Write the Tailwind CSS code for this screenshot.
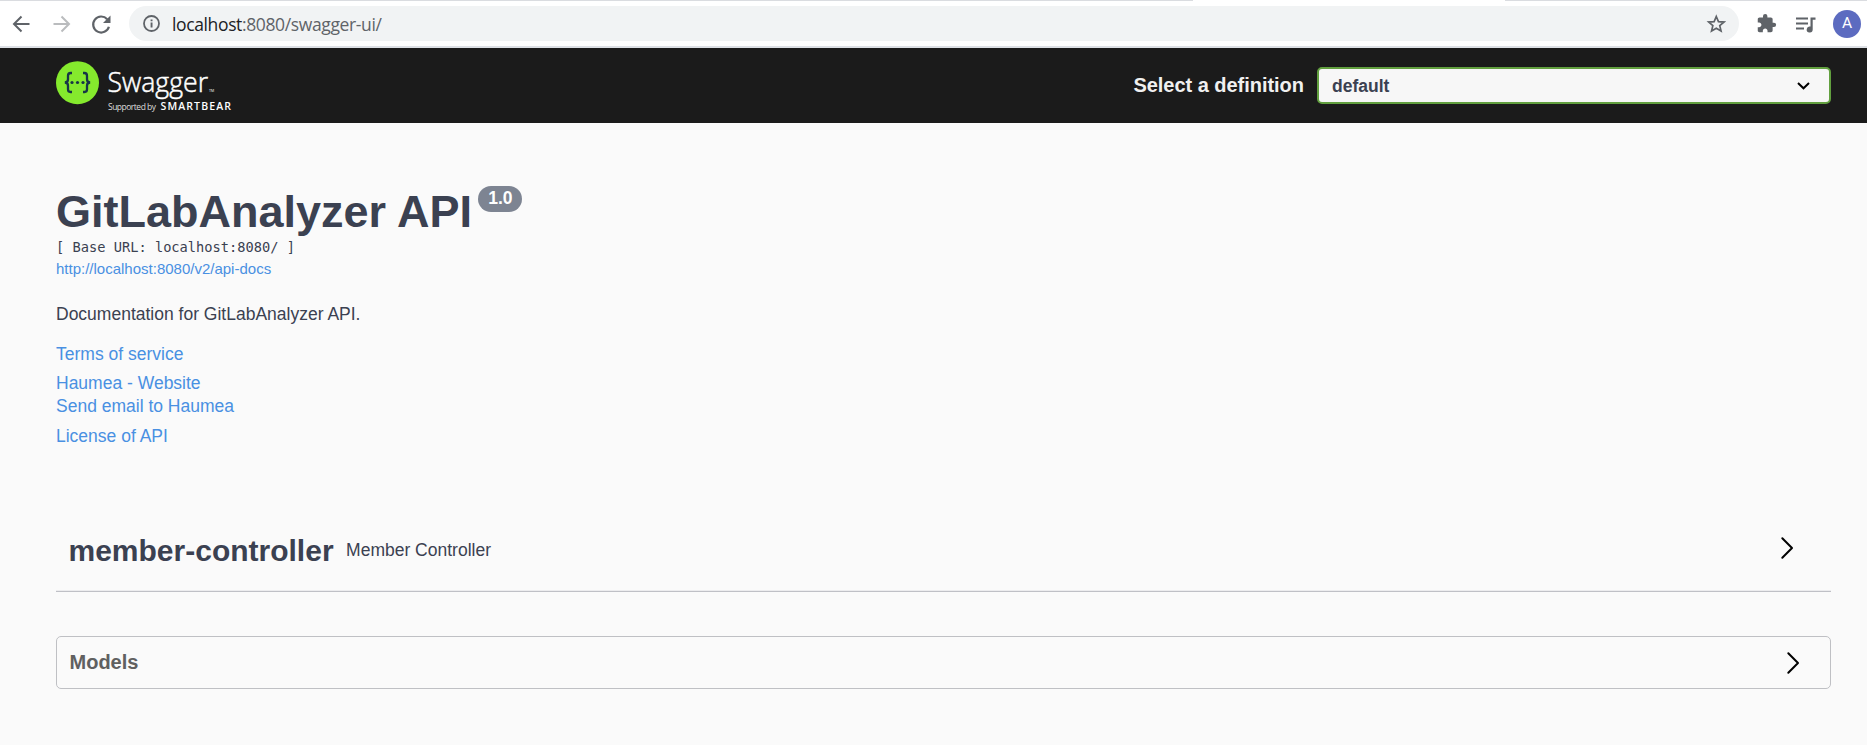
<!DOCTYPE html>
<html lang="en">
<head>
<meta charset="utf-8">
<title>Swagger UI</title>
<script src="https://cdn.jsdelivr.net/npm/@tailwindcss/browser@4"></script>
</head>
<body class="h-[745px] overflow-hidden bg-[#fafafa] font-['Liberation_Sans',Arial,sans-serif] text-[#3b4151]">
  <!-- Browser toolbar -->
  <div class="flex h-px bg-white"><div class="w-[1193px] bg-[#dadce0]"></div><div class="w-[312px]"></div><div class="flex-1 bg-[#dadce0]"></div></div>
  <div class="flex h-[47px] items-center border-b-2 border-[#dee1e6] bg-white pl-[9px] pr-[6px]">
    <svg class="size-6" viewBox="0 0 24 24" fill="none" stroke="#5f6368" stroke-width="2"><path d="M20.500 12H5.500M12.500 4.500L5 12l7.500 7.500"/></svg>
    <svg class="ml-4 size-6" viewBox="0 0 24 24" fill="none" stroke="#babcbe" stroke-width="2"><path d="M4.500 12H19.500M12.500 4.500L20 12l-7.500 7.500"/></svg>
    <svg class="ml-4 size-6" viewBox="0 0 24 24"><path d="M18.500 7A8 8 0 1 0 20.200 14.500" transform="translate(-.3 .2)" fill="none" stroke="#5f6368" stroke-width="2.200"/><path d="M21.500 3.500V11h-7.500z" fill="#5f6368"/></svg>
    <div class="ml-4 flex h-[35px] w-[1610px] items-center rounded-full bg-[#f1f3f4] pl-[14px] pr-[13px]">
      <svg class="size-[17px]" viewBox="0 0 17 17"><circle cx="8.500" cy="8.500" r="7.500" fill="none" stroke="#5f6368" stroke-width="1.800"/><path d="M7.600 7.500h1.900v5H7.600zM7.600 4.400h1.900v1.900H7.600z" fill="#5f6368"/></svg>
      <span class="ml-3 flex-1 whitespace-nowrap font-['Open_Sans',sans-serif] text-[17.5px] leading-6 tracking-[-0.37px] text-[#5f6368]"><span class="text-[#202124]">localhost</span>:8080/swagger-ui/</span>
      <svg class="size-5" viewBox="0 0 20 20" fill="none" stroke="#5f6368" stroke-width="1.700"><path d="M10.300 2.500l2.150 5.100 5.500.450-4.200 3.600 1.300 5.400-4.750-2.850-4.750 2.850 1.300-5.400-4.200-3.600 5.500-.450z"/></svg>
    </div>
    <svg class="ml-[17px] size-[21px]" viewBox="0 0 24 24" fill="#5f6368"><path d="M20.500 11H19V7c0-1.100-.9-2-2-2h-4V3.500a2.500 2.500 0 0 0-5 0V5H4c-1.100 0-2 .9-2 2v3.800h1.500c1.500 0 2.700 1.200 2.700 2.700S5 16.200 3.500 16.200H2V20c0 1.100.9 2 2 2h3.800v-1.500c0-1.500 1.200-2.700 2.700-2.700s2.700 1.200 2.700 2.700V22H17c1.100 0 2-.9 2-2v-4h1.500a2.500 2.500 0 0 0 0-5z"/></svg>
    <svg class="ml-[18px] h-5 w-[22px]" viewBox="0 0 22 20"><path d="M1 4.500H13M1 9.500H13M1 14.500H9" stroke="#5f6368" stroke-width="2"/><path d="M15.500 3.500H20.500v2.200h-2.800v9.800a3 3 0 1 1-2.200-2.900z" fill="#5f6368"/></svg>
    <div class="ml-4 flex size-7 items-center justify-center rounded-full bg-[#5c6bc0] pt-px font-[Roboto,sans-serif] text-[15.5px] text-white">A</div>
  </div>

  <!-- Swagger top bar -->
  <header class="flex h-[75px] items-center bg-[#1b1b1b] pl-14 pr-9">
    <svg class="h-[60px] w-[190px]" viewBox="0 0 190 60" fill="#fff">
      <circle cx="21.500" cy="26.700" r="21.500" fill="#85ea2d"/>
      <path d="M16 17h-1.500q-2.500 0-2.500 2.700v3.600q0 3.200-3.200 3.200 3.200 0 3.200 3.200v3.600q0 2.700 2.500 2.700H16M27 17h1.500q2.500 0 2.500 2.700v3.600q0 3.200 3.200 3.200-3.200 0-3.200 3.200v3.600q0 2.700-2.500 2.700H27" fill="none" stroke="#173647" stroke-width="2.300"/>
      <g fill="#173647"><circle cx="16" cy="26.500" r="1.600"/><circle cx="21.500" cy="26.500" r="1.600"/><circle cx="27" cy="26.500" r="1.600"/></g>
      <text x="51.500" y="35.500" textLength="100.500" lengthAdjust="spacingAndGlyphs" font-family="Open Sans" font-weight="300" stroke="#fff" stroke-width=".5" font-size="27.500">Swagger</text>
      <text x="153" y="35.500" font-family="Open Sans" font-size="3.500">TM</text>
      <text x="52" y="53.500" textLength="48" font-family="Open Sans" font-size="8.500" fill="#ddd">Supported by</text>
      <text x="104.500" y="53.500" textLength="70.500" font-family="Open Sans" font-weight="600" font-size="10.500">SMARTBEAR</text>
    </svg>
    <div class="flex-1"></div>
    <span class="mb-[2px] whitespace-nowrap text-[20px] font-bold leading-6 tracking-[-0.03px] text-[#f0f0f0]">Select a definition</span>
    <div class="ml-[13px] flex h-[37px] w-[514px] items-center rounded-[5px] border-2 border-[#62a03f] bg-[#f7f7f7] pl-[13px] pr-[19px]">
      <span class="flex-1 text-[17.5px] font-bold leading-6">default</span>
      <svg class="h-2 w-[13px]" viewBox="0 0 13 8" fill="none" stroke="#000" stroke-width="2"><path d="M1 1l5.500 5.300L12 1"/></svg>
    </div>
  </header>

  <main class="pl-14 pr-9 pt-[63px]">
    <div class="flex h-[51px] whitespace-nowrap">
      <h1 class="text-[45px] font-bold leading-[52px]">GitLabAnalyzer API</h1>
      <span class="ml-[6px] flex h-[26px] w-11 justify-center rounded-full bg-[#7d8492] pl-px text-[17.5px] font-bold leading-6 text-white">1.0</span>
    </div>
    <pre class="h-5 font-['DejaVu_Sans_Mono',monospace] text-[13.7px] leading-5">[ Base URL: localhost:8080/ ]</pre>
    <a class="block text-[15px] leading-[23px] text-[#4990e2]">http://localhost:8080/v2/api-docs</a>
    <p class="mt-[22px] text-[17.5px] leading-6">Documentation for GitLabAnalyzer API.</p>
    <div class="flex flex-col text-[17.5px] leading-6 text-[#4990e2]">
      <a class="mt-4">Terms of service</a>
      <a class="mt-[5px]">Haumea - Website</a>
      <a class="leading-[22px]">Send email to Haumea</a>
      <a class="mt-[7px]">License of API</a>
    </div>

    <section class="mt-[62px] flex h-[82px] items-center border-b border-[#bfc0c6] pl-[12.5px] pr-[37px] shadow-[inset_0_-1px_0_#ececee]">
      <h2 class="text-[30px] font-bold leading-9">member-controller</h2>
      <p class="mb-[2px] ml-[12.5px] flex-1 text-[17.5px] leading-6">Member Controller</p>
      <svg class="mb-[5px] h-6 w-[14px]" viewBox="0 0 14 24" fill="none" stroke="#000" stroke-width="2" stroke-linecap="round" stroke-linejoin="round"><path d="M2.300 2.200L12 12l-9.700 9.800"/></svg>
    </section>

    <section class="mt-11 flex h-[53px] items-center rounded-[5px] border border-[#bfc0c4] pl-[12.5px] pr-[30px]">
      <h3 class="mb-[2px] flex-1 text-[20px] font-bold leading-6 text-[#606060]">Models</h3>
      <svg class="h-6 w-[14px]" viewBox="0 0 14 24" fill="none" stroke="#000" stroke-width="2" stroke-linecap="round" stroke-linejoin="round"><path d="M2.300 2.200L12 12l-9.700 9.800"/></svg>
    </section>
  </main>
</body>
</html>
